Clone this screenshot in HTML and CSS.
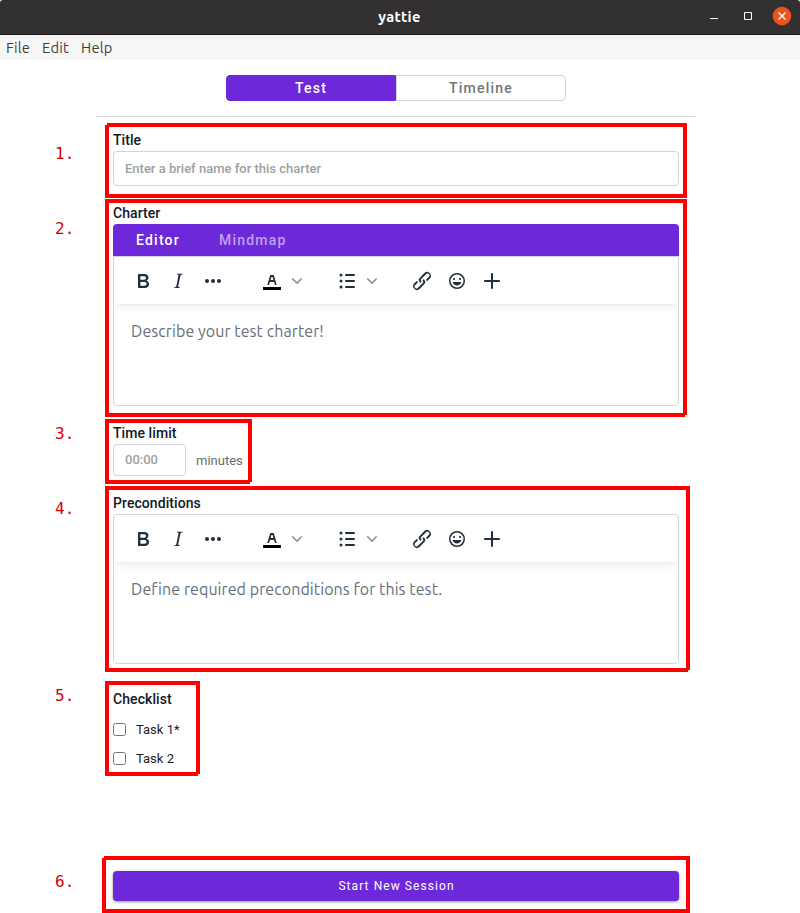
FILE: index.html
```html
<!DOCTYPE html>
<html lang="en">
<head>
<meta charset="utf-8">
<title>yattie</title>
<link rel="stylesheet" href="styles.css">
</head>
<body>
<svg class="defs" width="0" height="0">
  <symbol id="bold" viewBox="0 0 24 24"><path d="M7.8 19c-.3 0-.5 0-.6-.2l-.2-.5V5.7c0-.2 0-.4.2-.5l.6-.2h5c1.500 0 2.700.3 3.500 1 .7.6 1.100 1.400 1.100 2.500a3 3 0 0 1-.6 1.900c-.4.6-1 1-1.600 1.200.4.1.9.3 1.300.6s.8.7 1 1.200c.4.4.5 1 .5 1.600 0 1.300-.4 2.300-1.300 3-.8.7-2.100 1-3.800 1H7.800Zm5-8.300c.6 0 1.200-.1 1.600-.5.4-.3.6-.7.6-1.300 0-1.100-.8-1.700-2.300-1.700H9.300v3.500h3.400Zm.5 6c.7 0 1.300-.1 1.700-.4.4-.4.6-.9.6-1.500s-.2-1-.7-1.400c-.4-.3-1-.4-2-.4H9.400v3.800h4Z"/></symbol>
  <symbol id="italic" viewBox="0 0 24 24"><path d="m16.700 4.700-.1.900h-.3c-.6 0-1 0-1.400.3-.3.3-.4.6-.5 1.100l-2.100 9.800v.6c0 .5.4.8 1.400.8h.2l-.2.8H8l.2-.8h.2c1.100 0 1.800-.5 2-1.500l2-9.800.1-.5c0-.6-.4-.8-1.400-.8h-.3l.2-.9h5.700Z"/></symbol>
  <symbol id="more" viewBox="0 0 24 24"><circle cx="6" cy="12" r="2"/><circle cx="12" cy="12" r="2"/><circle cx="18" cy="12" r="2"/></symbol>
  <symbol id="color" viewBox="0 0 24 24"><path fill="#000" d="M3 18h18v3H3z"/><path d="M8.700 16h-.8a.5.5 0 0 1-.5-.6l2.700-9c.1-.3.3-.4.5-.4h2.800c.2 0 .4.1.5.4l2.700 9a.5.5 0 0 1-.5.6h-.8a.5.5 0 0 1-.4-.4l-.7-2.200c0-.3-.3-.4-.5-.4h-3.400c-.2 0-.4.1-.5.4l-.7 2.200c0 .3-.2.4-.4.4Zm2.600-7.600-.6 2a.5.5 0 0 0 .5.6h1.600a.5.5 0 0 0 .5-.6l-.6-2c0-.3-.3-.4-.5-.4h-.4c-.2 0-.4.1-.5.4Z"/></symbol>
  <symbol id="chevron" viewBox="0 0 10 10"><path d="M8.700 2.200c.3-.3.8-.3 1 0 .4.4.4.9 0 1.200L5.700 7.800c-.3.3-.9.3-1.200 0L.2 3.400a.8.8 0 0 1 0-1.200c.3-.3.8-.3 1.100 0L5 6l3.700-3.800Z"/></symbol>
  <symbol id="list" viewBox="0 0 24 24"><path d="M11 5h8a1 1 0 0 1 0 2h-8a1 1 0 0 1 0-2Zm0 6h8a1 1 0 0 1 0 2h-8a1 1 0 0 1 0-2Zm0 6h8a1 1 0 0 1 0 2h-8a1 1 0 0 1 0-2Z"/><circle cx="6" cy="6" r="1.500"/><circle cx="6" cy="12" r="1.500"/><circle cx="6" cy="18" r="1.500"/></symbol>
  <symbol id="link" viewBox="0 0 24 24"><path d="M6.200 12.300a1 1 0 0 1 1.400 1.400l-2 2a2 2 0 1 0 2.600 2.800l4.800-4.800a1 1 0 0 0 0-1.400 1 1 0 1 1 1.400-1.300 2.900 2.900 0 0 1 0 4L9.600 20a3.900 3.900 0 0 1-5.500-5.500l2-2Zm11.600-.6a1 1 0 0 1-1.400-1.400l2-2a2 2 0 1 0-2.600-2.800L11 10.300a1 1 0 0 0 0 1.400A1 1 0 1 1 9.600 13a2.900 2.900 0 0 1 0-4L14.400 4a3.900 3.900 0 0 1 5.500 5.500l-2 2Z"/></symbol>
  <symbol id="emoji" viewBox="0 0 24 24"><path d="M9 11c.6 0 1-.4 1-1s-.4-1-1-1a1 1 0 0 0-1 1c0 .6.4 1 1 1Zm6 0c.6 0 1-.4 1-1s-.4-1-1-1a1 1 0 0 0-1 1c0 .6.4 1 1 1Zm-3 5.500c2.100 0 4-1.500 4.400-3.500H7.600c.5 2 2.300 3.500 4.400 3.500ZM12 4a8 8 0 1 0 0 16 8 8 0 0 0 0-16Zm0 14.500a6.500 6.500 0 1 1 0-13 6.500 6.500 0 0 1 0 13Z"/></symbol>
  <symbol id="plus" viewBox="0 0 24 24"><path d="M12 4c.5 0 1 .4 1 .9V11h6a1 1 0 0 1 .1 2H13v6a1 1 0 0 1-2 .1V13H5a1 1 0 0 1-.1-2H11V5c0-.6.4-1 1-1Z"/></symbol>
</svg>

<header class="titlebar">
  <span class="name">yattie</span>
  <div class="controls">
    <svg width="8" height="8"><path d="M0 6.500h8" stroke="#fff"/></svg>
    <svg width="8" height="8"><path d="M.5.5h7v7h-7z" stroke="#fff" fill="none"/></svg>
    <svg width="20" height="20"><circle cx="10" cy="10" r="9.300" fill="#e95420"/><path d="M6.500 6.500l7 7M13.500 6.500l-7 7" stroke="#fff" stroke-width="1.300"/></svg>
  </div>
</header>
<nav class="menubar"><span>File</span><span>Edit</span><span>Help</span></nav>

<div class="tabs"><div class="tab active">Test</div><div class="tab">Timeline</div></div>
<div class="rule"></div>

<main>
  <section class="step title">
    <div class="num">1.</div>
    <div class="frame cut-start">
      <div class="label">Title</div>
      <div class="input">Enter a brief name for this charter</div>
    </div>
  </section>

  <section class="step charter">
    <div class="num">2.</div>
    <div class="frame cut-end">
      <div class="label">Charter</div>
      <div class="modes"><span>Editor</span><span class="off">Mindmap</span></div>
      <div class="editor flat">
        <div class="toolbar">
          <div class="group spaced"><i><svg><use href="#bold"/></svg></i><i><svg><use href="#italic"/></svg></i><i><svg><use href="#more"/></svg></i></div>
          <div class="group"><i><svg><use href="#color"/></svg></i><b><svg><use href="#chevron"/></svg></b></div>
          <div class="group"><i><svg><use href="#list"/></svg></i><b><svg><use href="#chevron"/></svg></b></div>
          <div class="group spaced"><i><svg><use href="#link"/></svg></i><i><svg><use href="#emoji"/></svg></i><i><svg><use href="#plus"/></svg></i></div>
        </div>
        <p>Describe your test charter!</p>
      </div>
    </div>
  </section>

  <section class="step time">
    <div class="num">3.</div>
    <div class="frame cut-end">
      <div class="label">Time limit</div>
      <div class="limit"><div class="input">00:00</div><span>minutes</span></div>
    </div>
  </section>

  <section class="step pre">
    <div class="num">4.</div>
    <div class="frame cut-end">
      <div class="label">Preconditions</div>
      <div class="editor">
        <div class="toolbar">
          <div class="group spaced"><i><svg><use href="#bold"/></svg></i><i><svg><use href="#italic"/></svg></i><i><svg><use href="#more"/></svg></i></div>
          <div class="group"><i><svg><use href="#color"/></svg></i><b><svg><use href="#chevron"/></svg></b></div>
          <div class="group"><i><svg><use href="#list"/></svg></i><b><svg><use href="#chevron"/></svg></b></div>
          <div class="group spaced"><i><svg><use href="#link"/></svg></i><i><svg><use href="#emoji"/></svg></i><i><svg><use href="#plus"/></svg></i></div>
        </div>
        <p>Define required preconditions for this test.</p>
      </div>
    </div>
  </section>

  <section class="step check">
    <div class="num">5.</div>
    <div class="frame cut-end">
      <div class="label">Checklist</div>
      <label class="task"><input type="checkbox">Task 1*</label>
      <label class="task"><input type="checkbox">Task 2</label>
    </div>
  </section>

  <section class="step start">
    <div class="num">6.</div>
    <div class="frame cut-start"><div class="button">Start New Session</div></div>
  </section>
</main>
</body>
</html>
```
FILE: styles.css
```css
* { box-sizing: border-box; }
body { margin: 0; height: 913px; overflow: hidden; background: #fff; font-family: Roboto, sans-serif; color: #111827; }
.defs { display: none; }

.titlebar { height: 35px; background: #323030; border-bottom: 1px solid #1c1b1b; display: grid; grid-template-columns: 1fr auto 1fr; align-items: center; border-radius: 3px 3px 0 0; }
.name { grid-column: 2; margin-right: 1px; font: 700 14.667px/20px Ubuntu, "Noto Sans", sans-serif; letter-spacing: .25px; color: #fff; }
.controls { display: flex; justify-content: flex-end; align-items: center; gap: 26px; padding: 0 8px 2px 0; }
.controls svg:last-child { margin-left: -6px; }

.menubar { height: 25px; background: #f6f6f6; display: flex; gap: 12px; padding-left: 6px; font: 14.667px/26px Ubuntu, "Noto Sans", sans-serif; letter-spacing: .22px; color: #3d3d3d; }

.tabs { width: 340px; height: 26px; margin: 15px 0 0 226px; display: flex; }
.tab { width: 170px; border: 1px solid #d1d5db; border-radius: 0 4px 4px 0; text-align: center; font: 500 14px/24px Roboto, sans-serif; letter-spacing: 1.25px; color: #757575; }
.tab.active { background: #6d28d9; border: 1px solid #6d28d9; border-radius: 4px 0 0 4px; color: #fff; }
.rule { width: 600px; height: 1px; margin: 15px 0 6px 96px; background: #dedede; }

.step { display: flex; padding-left: 55px; }
.num { width: 50px; flex: none; font: 16px/20px "DejaVu Sans Mono", monospace; color: #d40000; }
.frame { border: 4px solid #f00; width: 582px; padding-left: 4px; }
.cut-start { clip-path: polygon(2px 0, 100% 0, 100% 100%, 0 100%, 0 2px, 2px 2px); }
.cut-end { clip-path: polygon(0 0, 100% 0, 100% calc(100% - 2px), calc(100% - 2px) calc(100% - 2px), calc(100% - 2px) 100%, 0 100%); }
.label { font: 500 14px/20px Roboto, sans-serif; letter-spacing: .07px; height: 21px; }
.input { width: 566px; height: 35px; border: 1px solid #d1d5db; border-radius: 4px; padding-left: 11px; font: 500 13px/33px Roboto, sans-serif; color: #a0a0a0; }

.title .frame { height: 75px; padding-top: 3px; }
.title .num { padding-top: 21px; }
.charter { margin-top: 1px; }
.charter .frame { height: 218px; }
.charter .num { padding-top: 20px; }
.time { margin-top: 2px; }
.time .frame { width: 147px; height: 65px; }
.time .num { padding-top: 5px; }
.pre { margin-top: 2px; }
.pre .frame { width: 585px; height: 186px; padding-top: 3px; }
.pre .num { padding-top: 13px; }
.check { margin-top: 9px; }
.check .frame { width: 95px; height: 95px; padding-top: 4px; }
.check .num { padding-top: 5px; }
.start { margin-top: 80px; }
.start .num { width: 47px; padding-top: 16px; }
.start .frame { width: 588px; height: 57px; padding: 11px 0 0 7px; }

.modes { width: 566px; height: 32px; background: #6d28d9; border-radius: 4px 4px 0 0; padding-left: 23px; display: flex; gap: 39px; font: 500 14px/32px Roboto, sans-serif; letter-spacing: 1.22px; color: #fff; }
.modes .off { color: #c0a0ef; }
.editor { width: 566px; height: 150px; border: 1px solid #d1d5db; border-radius: 4px; }
.editor.flat { border-radius: 0 0 4px 4px; }
.toolbar { height: 47px; padding: 1px 0 0 12px; display: flex; align-items: center; gap: 25px; box-shadow: 0 2px 2px -2px rgba(34,47,62,.1), 0 8px 8px -4px rgba(34,47,62,.07); }
.group { display: flex; align-items: center; }
.spaced { gap: 1px; }
.group i { width: 34px; height: 24px; display: flex; justify-content: center; }
.group i svg { width: 24px; height: 24px; fill: #222f3e; }
.group b { width: 16px; height: 10px; display: flex; justify-content: center; }
.group b svg { width: 10px; height: 10px; fill: #9095a0; }
.editor p { margin: 16px 0 0 17px; font: 16px/22px Ubuntu, "Noto Sans", sans-serif; letter-spacing: .08px; color: #65707c; white-space: nowrap; }

.limit { display: flex; align-items: center; }
.limit .input { width: 73px; height: 32px; line-height: 30px; }
.limit span { margin-left: 10px; font-size: 13px; line-height: 18px; padding-top: 2px; color: #6b6b6b; }

.task { display: flex; align-items: center; gap: 10px; height: 29px; font-size: 13px; color: #1c1c1c; }
.task:first-of-type { margin-top: 5px; }
.task input { margin: 0; width: 13px; height: 13px; }

.button { width: 566px; height: 30px; background: #6d28d9; border-radius: 4px; box-shadow: 0 1px 3px rgba(0,0,0,.45); text-align: center; padding-left: 1px; font: 400 12px/30px Roboto, sans-serif; letter-spacing: 1.07px; color: #fff; }
```
